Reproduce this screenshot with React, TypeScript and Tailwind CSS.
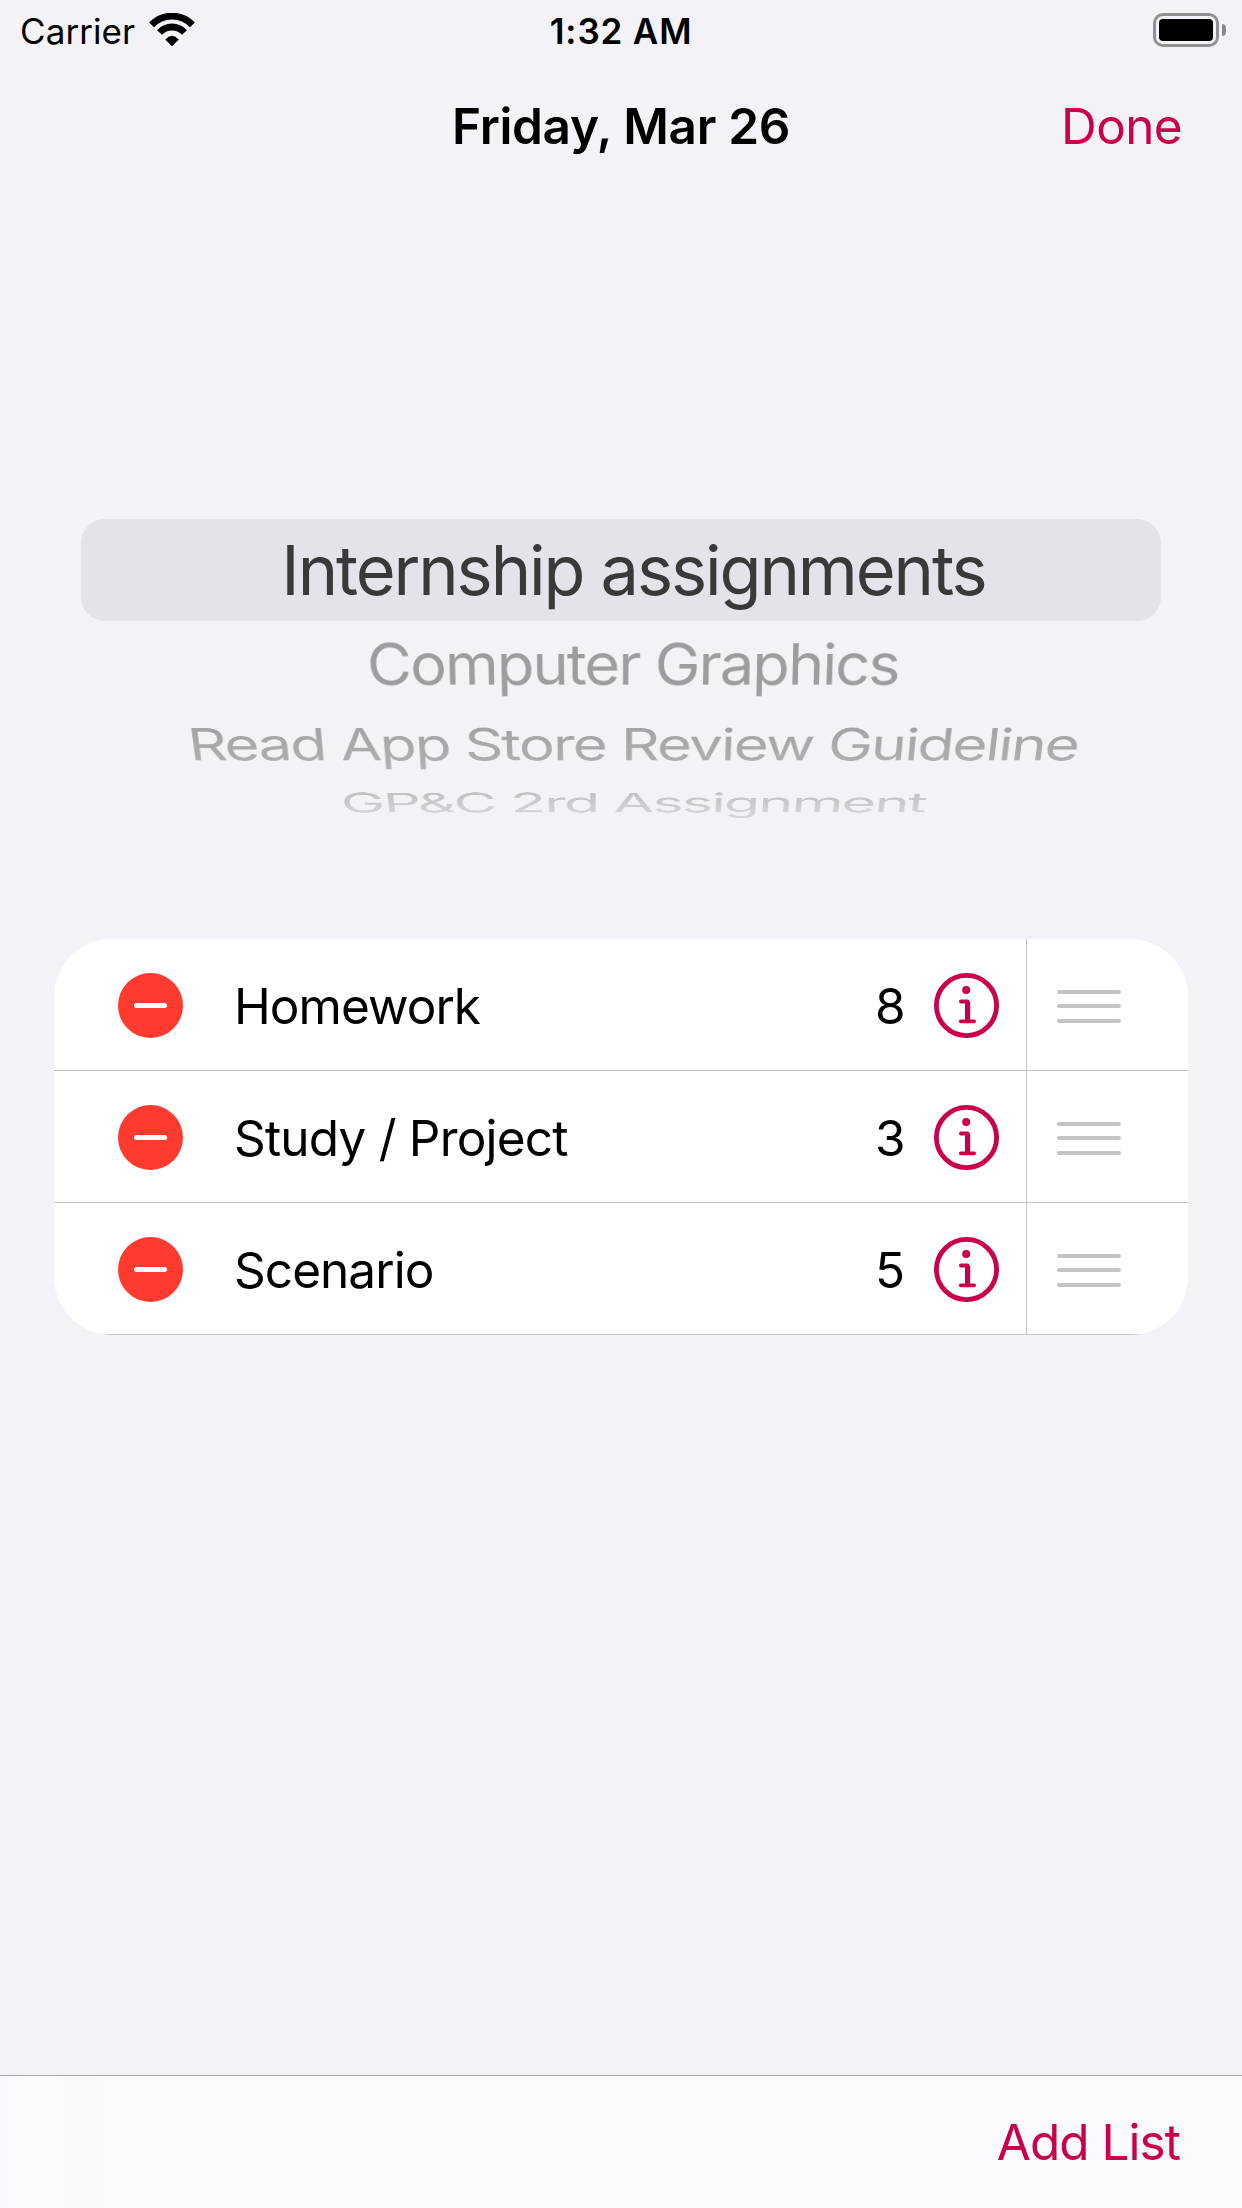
import React from "react";

const lists = [
  { name: "Homework", count: 8, tracking: "tracking-[-0.95px]" },
  { name: "Study / Project", count: 3, tracking: "tracking-[-0.8px]" },
  { name: "Scenario", count: 5, tracking: "tracking-[-0.95px]" },
];

function WifiIcon() {
  return (
    <svg width="46" height="34" viewBox="0 0 46 34" fill="none" stroke="#000" className="block">
      <path d="M2.6 11.9A28 28 0 0 1 43.4 11.9" strokeWidth="6.8" />
      <path d="M10.5 19.5A17 17 0 0 1 35.5 19.5" strokeWidth="6.8" />
      <path d="M23 33.3L16.2 26.5Q23 19.2 29.8 26.5Z" fill="#000" stroke="none" />
    </svg>
  );
}

function BatteryIcon() {
  return (
    <div className="flex items-center gap-[3px]">
      <div className="h-[34px] w-[66px] rounded-[10px] border-[3px] border-[#919193] p-[3px]">
        <div className="h-full w-full rounded-[4px] bg-black" />
      </div>
      <div className="h-[12px] w-[4px] rounded-r-[6px] bg-[#8a8a8c]" />
    </div>
  );
}

function StatusBar() {
  return (
    <div className="grid h-[60px] grid-cols-[1fr_auto_1fr] items-center pt-[2px] text-[35px] leading-none">
      <div className="flex items-center gap-[14px] pl-[20px]">
        <span className="tracking-[0.08px]">Carrier</span>
        <div className="-mt-[3px]">
          <WifiIcon />
        </div>
      </div>
      <span className="font-[560] tracking-[0.85px]">1:32 AM</span>
      <div className="-mt-[2px] flex justify-end pr-[16px]">
        <BatteryIcon />
      </div>
    </div>
  );
}

function NavBar() {
  return (
    <header className="grid h-[132px] grid-cols-[1fr_auto_1fr] items-center pt-[2px] text-[49.5px] leading-none">
      <span />
      <h1 className="font-semibold tracking-[-0.33px]">Friday, Mar 26</h1>
      <button className="justify-self-end pr-[60px] tracking-[-0.65px] text-[#c9004b]">Done</button>
    </header>
  );
}

function Picker() {
  return (
    <section className="mt-[327px] h-[420px] whitespace-nowrap text-center text-[68.5px] leading-none tracking-[-2.1px]">
      <div className="mx-[81px] flex h-[102px] items-center justify-center rounded-[24px] bg-[#e4e3e9] pl-[25px] pt-[2px] text-[#39393a]">
        Internship assignments
      </div>
      <div className="flex flex-col text-[#9d9d9f] [mask-image:linear-gradient(to_bottom,#000_60px,rgba(0,0,0,.93)_108px,rgba(0,0,0,.8)_140px,rgba(0,0,0,.57)_172px,rgba(0,0,0,.33)_194px)]">
        <div className="mt-[3px] flex h-[80px] items-center justify-center pl-[27px] pt-[2px] [transform:perspective(3800px)_rotateX(-30deg)_scale(0.895,0.955)]">
          Computer Graphics
        </div>
        <div className="mt-px flex h-[80px] items-center justify-center pl-[28px] pt-[1px] [transform:perspective(3800px)_rotateX(-50deg)_scale(0.878,1)]">
          Read App Store Review Guideline
        </div>
        <div className="-mt-[22px] flex h-[80px] items-center justify-center pl-[28px] [transform:perspective(3800px)_rotateX(-62deg)_scale(0.866,0.835)]">
          GP&amp;C 2rd Assignment
        </div>
      </div>
    </section>
  );
}

function InfoIcon() {
  return (
    <svg width="65" height="65" viewBox="0 0 65 65" fill="none" stroke="#c9004b" className="block">
      <circle cx="32.5" cy="32.5" r="30.1" strokeWidth="4.8" />
      <circle cx="32.2" cy="17" r="4" fill="#c9004b" stroke="none" />
      <path d="M26.9 28.5H33.6V48.3" strokeWidth="3.8" strokeLinecap="round" strokeLinejoin="round" />
      <path d="M33.6 28.5V48" strokeWidth="5.2" />
      <path d="M26.8 48.3H40.1" strokeWidth="3.8" strokeLinecap="round" />
    </svg>
  );
}

function ListRow({ name, count, tracking }: (typeof lists)[number]) {
  return (
    <li className="flex h-[132px] items-center border-b border-[#c4c4c6] text-[49.5px] leading-none">
      <button className="ml-[64px] mt-[2px] flex h-[65px] w-[65px] items-center justify-center rounded-full bg-[#ff3b30]">
        <span className="h-[5px] w-[33px] rounded-full bg-white" />
      </button>
      <span className={`ml-[51px] mt-[4px] flex-1 ${tracking}`}>{name}</span>
      <span className="mt-[4px] w-[59px]">{count}</span>
      <button className="mt-[2px]">
        <InfoIcon />
      </button>
      <div className="ml-[27px] flex h-[132px] w-[162px] items-center border-l border-[#c4c4c6] pl-[30px]">
        <div className="mt-[3px] flex w-[64px] flex-col gap-[10.5px]">
          <span className="h-[4px] rounded-full bg-[#c4c4c6]" />
          <span className="h-[4px] rounded-full bg-[#c4c4c6]" />
          <span className="h-[4px] rounded-full bg-[#c4c4c6]" />
        </div>
      </div>
    </li>
  );
}

export default function App() {
  return (
    <div className="flex h-[2208px] w-[1242px] flex-col overflow-hidden bg-[#f2f2f7] font-['Inter',sans-serif] text-black">
      <StatusBar />
      <NavBar />
      <Picker />
      <ul className="mx-[54px] overflow-hidden rounded-[58px] bg-white">
        {lists.map((l) => (
          <ListRow key={l.name} {...l} />
        ))}
      </ul>
      <footer className="mt-auto flex h-[133px] items-center justify-end border-t border-[#a6a6ab] bg-[linear-gradient(to_right,#f9f8fd_0px,#fbfbfd_28px,#fbfbfd_50px,#f9f9fd_75px,#fafafc_110px)] pr-[62px] pt-[2px] text-[49.5px] leading-none">
        <button className="tracking-[-0.97px] text-[#c9004b]">Add List</button>
      </footer>
    </div>
  );
}
